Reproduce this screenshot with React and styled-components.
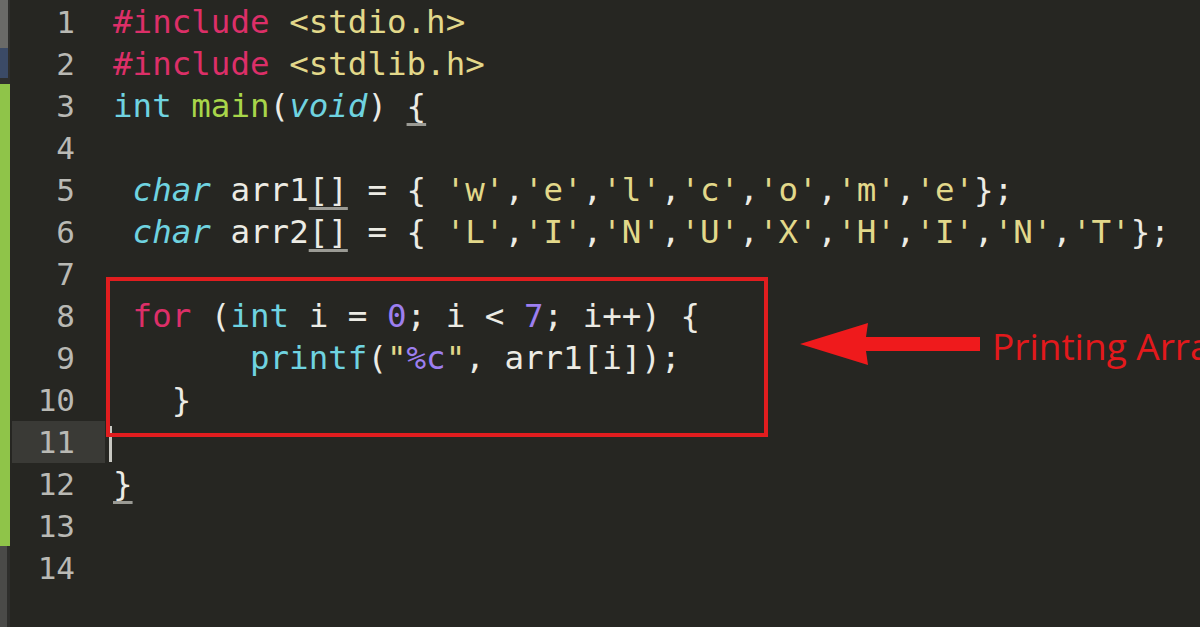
import styled, { createGlobalStyle } from "styled-components";

const GlobalStyle = createGlobalStyle`
  html, body {
    margin: 0;
    padding: 0;
    background: #262622;
  }
`;

const C = {
  bg: "#262622",
  text: "#ecebe4",
  pink: "#dc2f68",
  yellow: "#e2d88a",
  cyan: "#6fd3e0",
  green: "#a8d64a",
  purple: "#9d7ff0",
};

// each line: leading spaces + tokens [text, kind]
const lines = [
  [0, [["#include", "pink"], [" "], ["<stdio.h>", "yellow"]]],
  [0, [["#include", "pink"], [" "], ["<stdlib.h>", "yellow"]]],
  [0, [["int", "cyan"], [" "], ["main", "green"], ["("], ["void", "cyanI"], [") "], ["{", "match"]]],
  [0, []],
  [1, [["char", "cyanI"], [" arr1"], ["[]", "match"], [" = { "], ["'w'", "yellow"], [","], ["'e'", "yellow"], [","], ["'l'", "yellow"], [","], ["'c'", "yellow"], [","], ["'o'", "yellow"], [","], ["'m'", "yellow"], [","], ["'e'", "yellow"], ["};"]]],
  [1, [["char", "cyanI"], [" arr2"], ["[]", "match"], [" = { "], ["'L'", "yellow"], [","], ["'I'", "yellow"], [","], ["'N'", "yellow"], [","], ["'U'", "yellow"], [","], ["'X'", "yellow"], [","], ["'H'", "yellow"], [","], ["'I'", "yellow"], [","], ["'N'", "yellow"], [","], ["'T'", "yellow"], ["};"]]],
  [0, []],
  [1, [["for", "pink"], [" ("], ["int", "cyan"], [" i = "], ["0", "purple"], ["; i < "], ["7", "purple"], ["; i++) {"]]],
  [7, [["printf", "cyan"], ["("], ["\"", "yellow"], ["%c", "purple"], ["\"", "yellow"], [", arr1[i]);"]]],
  [3, [["}"]]],
  [0, [], true],
  [0, [["}", "match"]]],
  [0, []],
  [0, []],
];

const colors = {
  pink: C.pink,
  yellow: C.yellow,
  cyan: C.cyan,
  cyanI: C.cyan,
  green: C.green,
  purple: C.purple,
  match: C.text,
};

const Editor = styled.div`
  position: relative;
  display: flex;
  width: 1200px;
  height: 627px;
  overflow: hidden;
  background: ${C.bg};
`;

const Strip = styled.div`
  display: flex;
  flex-direction: column;
  width: 10px;
  flex-shrink: 0;
  background: #2e2e2c;
`;

const StripPart = styled.div`
  height: ${(p) => p.$h}px;
  width: ${(p) => p.$w || 10}px;
  background: ${(p) => p.$c};
`;

const Gutter = styled.div`
  width: 95px;
  flex-shrink: 0;
  padding-top: 1px;
  font-family: "DejaVu Sans Mono", "Liberation Mono", monospace;
  font-size: 31px;
  color: #b9b9b4;
`;

const GutterRow = styled.div`
  height: 42px;
  line-height: 42px;
  margin-left: 2px;
  padding-right: 30px;
  text-align: right;
  background: ${(p) => (p.$active ? "#3a3a36" : "transparent")};
`;

const Code = styled.div`
  flex: 1;
  padding-top: 1px;
  padding-left: 8px;
  font-family: "DejaVu Sans Mono", "Liberation Mono", monospace;
  font-size: 32.5px;
  color: ${C.text};
`;

const CodeLine = styled.div`
  height: 42px;
  line-height: 42px;
  white-space: pre;
`;

const Tok = styled.span`
  color: ${(p) => colors[p.$kind] || C.text};
  font-style: ${(p) => (p.$kind === "cyanI" ? "italic" : "normal")};
  ${(p) => p.$kind === "match" && "text-decoration: underline; text-decoration-color: #9a9a94; text-underline-offset: 6px;"}
`;

const Cursor = styled.span`
  display: inline-block;
  width: 3px;
  height: 36px;
  margin-left: -4px;
  vertical-align: middle;
  background: #c8c8c2;
`;

const Highlight = styled.div`
  position: absolute;
  left: 106px;
  top: 277px;
  width: 662px;
  height: 160px;
  box-sizing: border-box;
  border: 4px solid #e11d1f;
`;

const Note = styled.div`
  position: absolute;
  left: 800px;
  top: 316px;
  display: flex;
  align-items: center;
  gap: 12px;
  white-space: nowrap;
`;

const NoteText = styled.span`
  font-family: "Open Sans", "Liberation Sans", sans-serif;
  font-size: 37px;
  color: #e3191c;
  margin-top: 4px;
`;

export default function App() {
  return (
    <>
      <GlobalStyle />
      <Editor>
        <Strip>
          <StripPart $h={48} $w={8} $c="#6a6a68" />
          <StripPart $h={30} $w={8} $c="#3b4a66" />
          <StripPart $h={6} $c="#2e2e2c" />
          <StripPart $h={462} $c="#8fc449" />
          <StripPart $h={81} $w={7} $c="#4a4a48" />
        </Strip>
        <Gutter>
          {lines.map((l, i) => (
            <GutterRow key={i} $active={i === 10}>
              {i + 1}
            </GutterRow>
          ))}
        </Gutter>
        <Code>
          {lines.map(([indent, toks, cursor], i) => (
            <CodeLine key={i}>
              {cursor && <Cursor />}
              {" ".repeat(indent)}
              {toks.map(([t, k], j) => (
                <Tok key={j} $kind={k}>
                  {t}
                </Tok>
              ))}
            </CodeLine>
          ))}
        </Code>
        <Highlight />
        <Note>
          <svg width="180" height="44" viewBox="0 0 180 44">
            <polygon
              points="0,22 68,1 66,15 180,15 180,29 66,29 68,43"
              fill="#ef1a1c"
            />
          </svg>
          <NoteText>Printing Array</NoteText>
        </Note>
      </Editor>
    </>
  );
}
